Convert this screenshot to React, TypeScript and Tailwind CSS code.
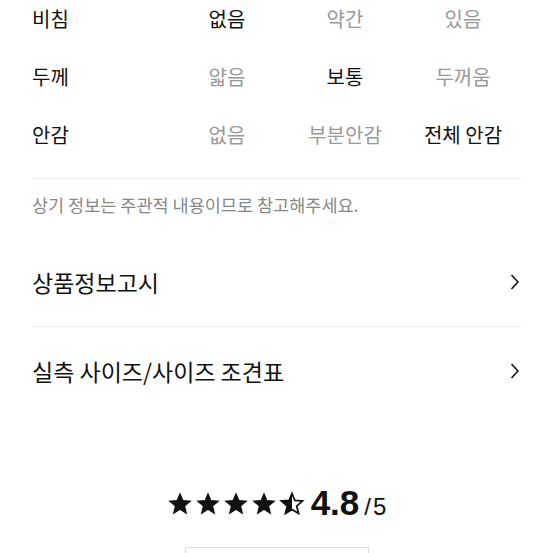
import React from "react";

const rows = [
  { label: "비침", values: ["없음", "약간", "있음"], sel: 0 },
  { label: "두께", values: ["얇음", "보통", "두꺼움"], sel: 1 },
  { label: "안감", values: ["없음", "부분안감", "전체 안감"], sel: 2 },
];

const STAR = "M12 1.2l3 7.2 7.8.6-6 5.1 1.9 7.6L12 17.6l-6.7 4.1 1.9-7.6-6-5.1 7.8-.6z";

function Star({ half }: { half?: boolean }) {
  return (
    <svg width="26" height="26" viewBox="0 0 24 24">
      {half ? (
        <>
          <defs>
            <clipPath id="lh">
              <rect x="0" y="0" width="12" height="24" />
            </clipPath>
          </defs>
          <path d={STAR} fill="none" stroke="#111" strokeWidth="1.8" strokeLinejoin="miter" transform="translate(1.2 1.2) scale(0.9)" />
          <path d={STAR} fill="#111" clipPath="url(#lh)" />
        </>
      ) : (
        <path d={STAR} fill="#111" />
      )}
    </svg>
  );
}

function Chevron() {
  return (
    <svg width="9" height="16" viewBox="0 0 9 16" className="mr-[2px]">
      <polyline points="1.5,1 8,8 1.5,15" fill="none" stroke="#111" strokeWidth="1.6" />
    </svg>
  );
}

export default function App() {
  return (
    <div
      className="w-[553px] h-[553px] overflow-hidden bg-white px-8"
      style={{ fontFamily: '"Noto Sans CJK KR", "Noto Sans", sans-serif' }}
    >
      <div className="-mt-[10px]">
        {rows.map((r) => (
          <div key={r.label} className="grid grid-cols-[136px_118px_118px_118px] h-[58px] items-center text-[20px]">
            <div className="text-[#111]">{r.label}</div>
            {r.values.map((v, i) => (
              <div key={v + i} className={"text-center " + (i === r.sel ? "text-[#111]" : "text-[#999]")}>
                {v}
              </div>
            ))}
          </div>
        ))}
      </div>
      <div className="mt-[14px] h-px bg-[#eeeeee]" />
      <div className="mt-[15px] text-[17.5px] leading-[22px] text-[#888]">상기 정보는 주관적 내용이므로 참고해주세요.</div>
      <div className="mt-[22px] h-[88px] flex items-center justify-between text-[23px] text-[#111]">
        <span>상품정보고시</span>
        <Chevron />
      </div>
      <div className="h-px bg-[#eeeeee]" />
      <div className="h-[88px] flex items-center justify-between text-[23px] text-[#111]">
        <span>실측 사이즈/사이즈 조견표</span>
        <Chevron />
      </div>
      <div className="mt-[68px] flex items-center justify-center">
        <div className="flex items-center gap-[2px]">
          <Star />
          <Star />
          <Star />
          <Star />
          <Star half />
        </div>
        <div className="ml-[6px] flex items-baseline" style={{ fontFamily: '"Liberation Sans", Arial, sans-serif' }}>
          <span className="text-[35px] font-bold leading-[40px] text-[#111]">4.8</span>
          <span className="ml-[5px] text-[24px] text-[#111]">/</span>
          <span className="ml-[2px] text-[24px] text-[#111]">5</span>
        </div>
      </div>
      <div className="mx-auto mt-[22px] w-[184px] h-[40px] border border-[#dddddd]" />
    </div>
  );
}
